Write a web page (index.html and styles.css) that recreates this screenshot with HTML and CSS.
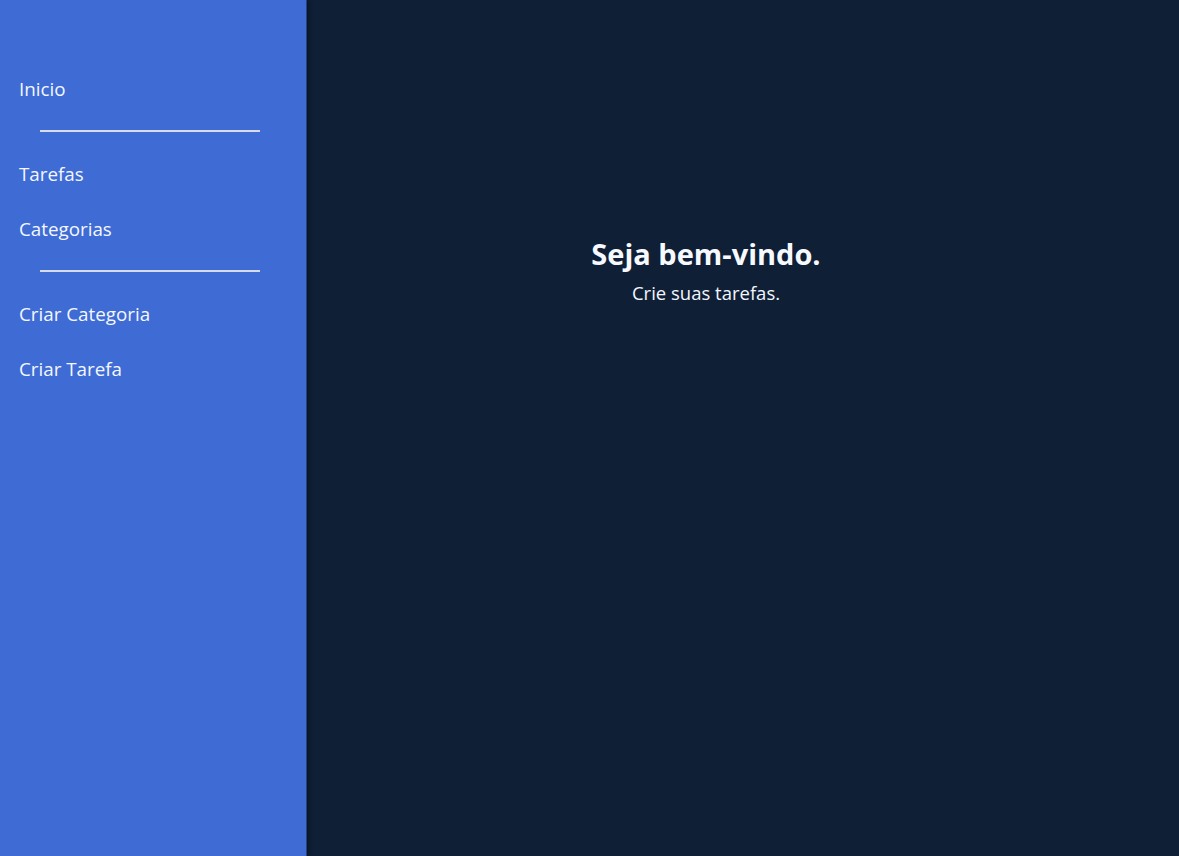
FILE: index.html
```html
<!DOCTYPE html>
<html lang="pt">
<head>
<meta charset="utf-8">
<title>Tarefas</title>
<link rel="stylesheet" href="styles.css">
</head>
<body>
<div class="app">
  <nav class="sidebar">
    <a class="nav-item" href="#">Inicio</a>
    <hr class="divider">
    <a class="nav-item" href="#">Tarefas</a>
    <a class="nav-item" href="#">Categorias</a>
    <hr class="divider">
    <a class="nav-item" href="#">Criar Categoria</a>
    <a class="nav-item" href="#">Criar Tarefa</a>
  </nav>
  <main class="main">
    <div class="welcome">
      <h1 class="title">Seja bem-vindo.</h1>
      <p class="subtitle">Crie suas tarefas.</p>
    </div>
  </main>
</div>
</body>
</html>
```
FILE: styles.css
```css
html, body {
  margin: 0;
  padding: 0;
  height: 100%;
}
body {
  font-family: "Open Sans", "Noto Sans", sans-serif;
  background: #0f1f36;
  color: #f2f6ff;
}
.app {
  display: flex;
  height: 100vh;
}
.sidebar {
  width: 306px;
  flex: 0 0 306px;
  background: #3e6bd4;
  padding-top: 62px;
  display: flex;
  flex-direction: column;
  box-shadow: 1px 0 0 #233f86, 3px 0 4px rgba(0,0,0,0.35);
  position: relative;
  z-index: 1;
}
.nav-item {
  display: block;
  padding: 16px 19px;
  line-height: 23px;
  font-size: 18.8px;
  color: #f4f7ff;
  text-decoration: none;
}
.divider {
  border: 0;
  height: 2px;
  background: #d6dbe6;
  margin: 13px 46px 15px 40px;
}
.main {
  flex: 1;
  display: flex;
  justify-content: flex-start;
}
.welcome {
  width: 800px;
  text-align: center;
  padding-top: 234px;
}
.title {
  margin: 0;
  font-size: 29px;
  font-weight: 700;
  line-height: 40px;
  color: #f6f9ff;
}
.subtitle {
  margin: 6px 0 0;
  font-size: 18.5px;
  line-height: 26px;
  color: #f2f6ff;
}
```
